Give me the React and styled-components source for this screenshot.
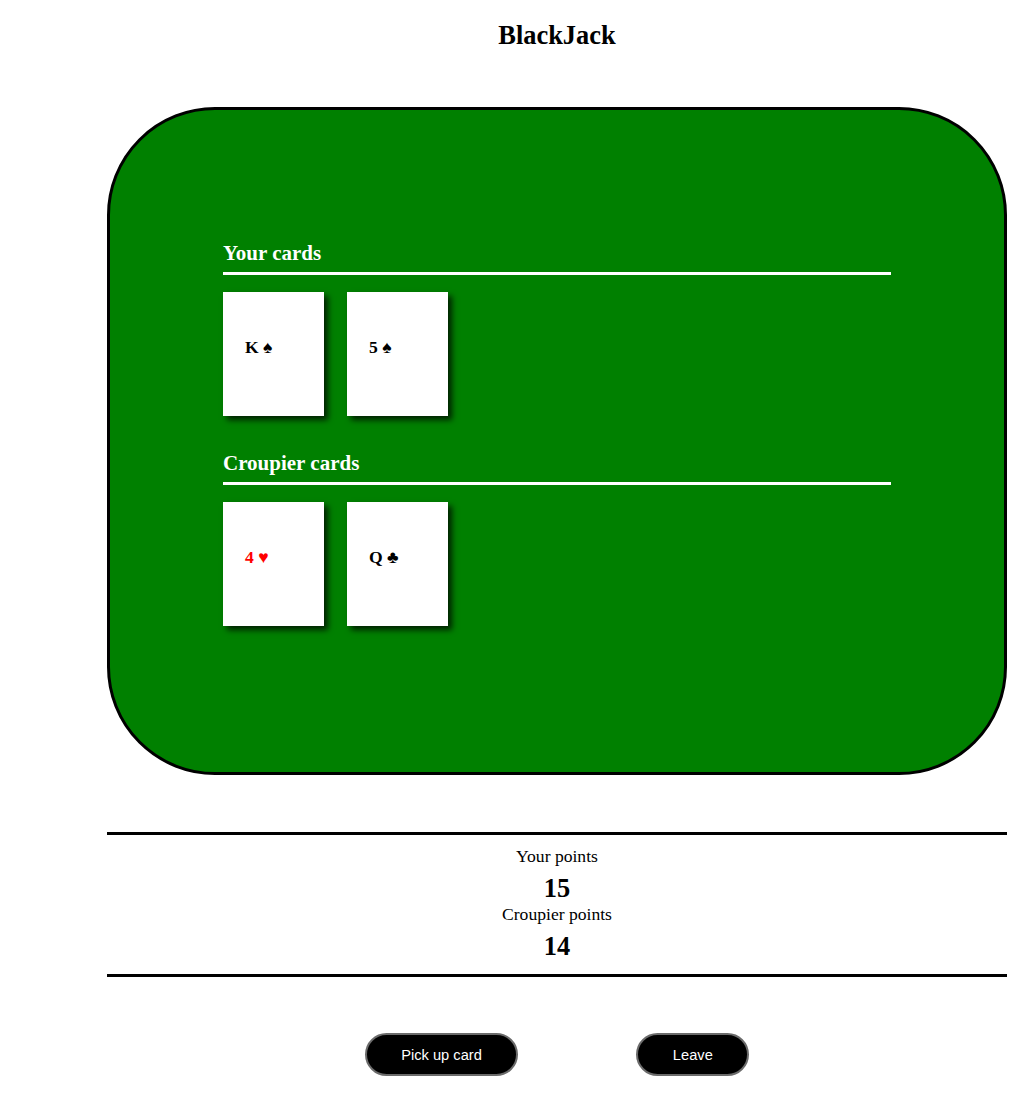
import React from 'react';
import styled, { createGlobalStyle } from 'styled-components';

const GlobalStyle = createGlobalStyle`
  body {
    margin: 0;
    background: #fff;
    font-family: "Liberation Serif", "Times New Roman", "DejaVu Serif", serif;
    color: #000;
  }
`;

const Page = styled.div`
  width: 900px;
  margin-left: 107px;
  padding-bottom: 28px;
`;

const Title = styled.h2`
  margin: 20px 0 0;
  font-size: 26.4px;
  line-height: 30px;
  font-weight: bold;
  text-align: center;
`;

const Table = styled.div`
  box-sizing: border-box;
  margin-top: 57px;
  height: 668px;
  padding: 131px 113px 0;
  background: #008000;
  border: 3px solid #000;
  border-radius: 108px;
  display: flex;
  flex-direction: column;
`;

const Hand = styled.section`
  & + & {
    margin-top: 35px;
  }
`;

const HandTitle = styled.h3`
  margin: 0;
  padding-bottom: 7px;
  border-bottom: 3px solid #fff;
  color: #fff;
  font-size: 21px;
  line-height: 24px;
  font-weight: bold;
`;

const CardRow = styled.div`
  display: flex;
  gap: 23px;
  margin-top: 17px;
`;

const Card = styled.div`
  box-sizing: border-box;
  width: 101px;
  height: 124px;
  padding: 45px 22px 0;
  background: #fff;
  box-shadow: 4px 4px 6px rgba(0, 0, 0, 0.75);
  font-size: 17.6px;
  line-height: 20px;
  font-weight: bold;
  color: ${(p) => (p.$red ? '#ff0000' : '#000')};
  white-space: nowrap;
`;

const Score = styled.div`
  margin-top: 57px;
  padding: 11px 0 12px;
  border-top: 3px solid #000;
  border-bottom: 3px solid #000;
  text-align: center;
`;

const ScoreLabel = styled.div`
  font-size: 17.6px;
  line-height: 20px;
`;

const ScoreValue = styled.div`
  margin: 7px 0 1px;
  font-size: 26.4px;
  line-height: 30px;
  font-weight: bold;
`;

const Actions = styled.div`
  display: flex;
  justify-content: center;
  gap: 118px;
  margin-top: 56px;
`;

const Button = styled.button`
  height: 43px;
  padding: 0 34.5px;
  background: #000;
  color: #fff;
  border: 2px solid #6b6b6b;
  border-radius: 22px;
  font-family: "Liberation Sans", Arial, sans-serif;
  font-size: 14.67px;
  cursor: pointer;
`;

const hands = [
  {
    title: 'Your cards',
    cards: [
      { rank: 'K', suit: '♠' },
      { rank: '5', suit: '♠' },
    ],
  },
  {
    title: 'Croupier cards',
    cards: [
      { rank: '4', suit: '♥', red: true },
      { rank: 'Q', suit: '♣' },
    ],
  },
];

const App = () => {
  return (
    <>
      <GlobalStyle />
      <Page>
        <Title>BlackJack</Title>
        <Table>
          {hands.map((hand) => (
            <Hand key={hand.title}>
              <HandTitle>{hand.title}</HandTitle>
              <CardRow>
                {hand.cards.map((c) => (
                  <Card key={c.rank + c.suit} $red={c.red}>
                    {c.rank} {c.suit}
                  </Card>
                ))}
              </CardRow>
            </Hand>
          ))}
        </Table>
        <Score>
          <ScoreLabel>Your points</ScoreLabel>
          <ScoreValue>15</ScoreValue>
          <ScoreLabel>Croupier points</ScoreLabel>
          <ScoreValue>14</ScoreValue>
        </Score>
        <Actions>
          <Button>Pick up card</Button>
          <Button>Leave</Button>
        </Actions>
      </Page>
    </>
  );
};

export default App;
